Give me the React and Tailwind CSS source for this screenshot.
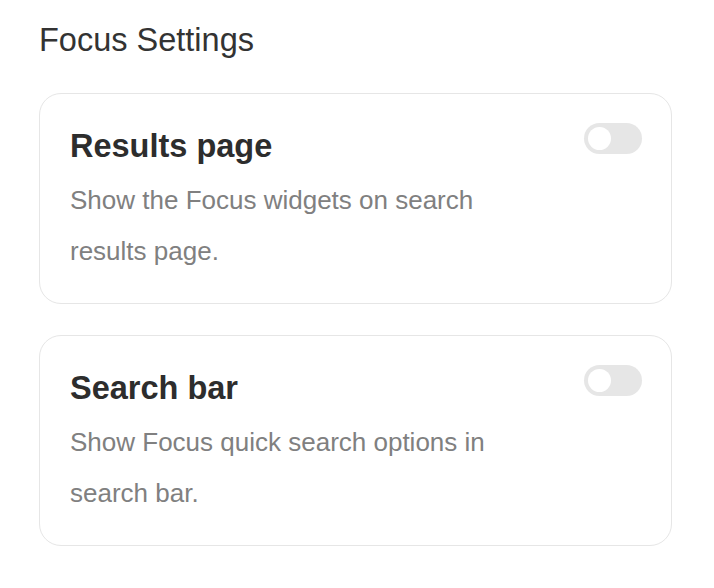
import React from "react";

function Toggle() {
  return (
    <div className="flex h-[31px] w-[58px] shrink-0 items-center rounded-full bg-[#e6e6e6] px-[4px]">
      <div className="h-[23px] w-[23px] rounded-full bg-white" />
    </div>
  );
}

function Card({ title, desc }) {
  return (
    <div className="rounded-[22px] border border-[#e6e6e6] bg-white pl-[30px] pr-[29px] pt-[29px] pb-[26px]">
      <div className="flex items-start justify-between">
        <div className="w-[450px]">
          <div className="pt-[3px] text-[32.5px] font-bold leading-[40px] text-[#2d2d2d]">
            {title}
          </div>
          <div className="mt-[9px] text-[26px] leading-[51px] text-[#808080]">
            {desc}
          </div>
        </div>
        <Toggle />
      </div>
    </div>
  );
}

export default function App() {
  return (
    <div className="min-h-[588px] w-[714px] bg-white px-[39px] pt-[20px] font-['Liberation_Sans',Arial,sans-serif]">
      <h1 className="text-[32.5px] leading-[40px] text-[#333333]">Focus Settings</h1>
      <div className="mt-[33px] flex w-[633px] flex-col gap-[31px]">
        <Card title="Results page" desc="Show the Focus widgets on search results page." />
        <Card title="Search bar" desc="Show Focus quick search options in search bar." />
      </div>
    </div>
  );
}
